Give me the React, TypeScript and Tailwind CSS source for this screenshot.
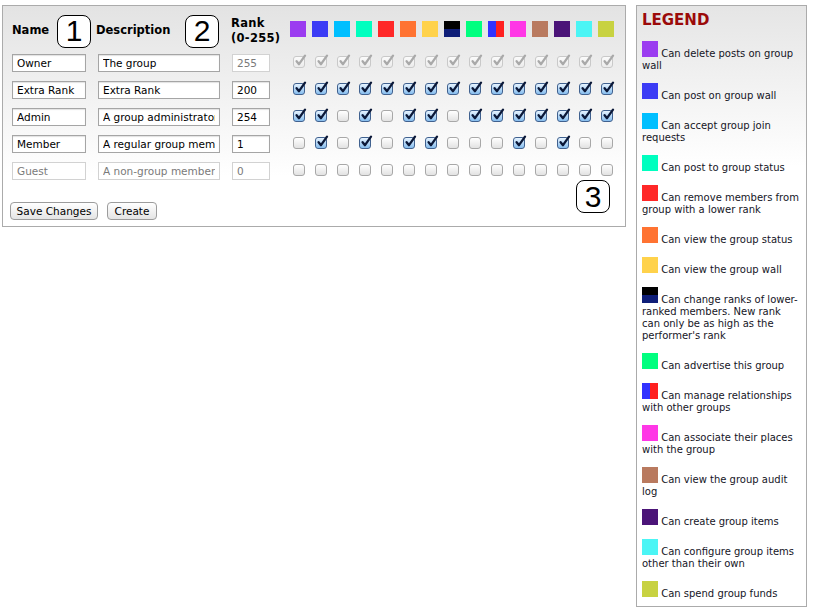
type Swatch = { bg: string; label: string };

const perms: Swatch[] = [
	{ bg: "bg-[#9b3cf0]", label: "Can delete posts on group wall" },
	{ bg: "bg-[#3c3cf5]", label: "Can post on group wall" },
	{ bg: "bg-[#00bfff]", label: "Can accept group join requests" },
	{ bg: "bg-[#00ffbf]", label: "Can post to group status" },
	{ bg: "bg-[#ff2828]", label: "Can remove members from group with a lower rank" },
	{ bg: "bg-[#ff7332]", label: "Can view the group status" },
	{ bg: "bg-[#ffd24b]", label: "Can view the group wall" },
	{
		bg: "bg-[linear-gradient(#000000_50%,#0f1e78_50%)]",
		label:
			"Can change ranks of lower-ranked members. New rank can only be as high as the performer's rank",
	},
	{ bg: "bg-[#00ff7f]", label: "Can advertise this group" },
	{
		bg: "bg-[linear-gradient(to_right,#3232ff_50%,#ff2020_50%)]",
		label: "Can manage relationships with other groups",
	},
	{ bg: "bg-[#ff37e6]", label: "Can associate their places with the group" },
	{ bg: "bg-[#b97a5f]", label: "Can view the group audit log" },
	{ bg: "bg-[#4b1478]", label: "Can create group items" },
	{ bg: "bg-[#4bf5f5]", label: "Can configure group items other than their own" },
	{ bg: "bg-[#c8d241]", label: "Can spend group funds" },
];

const all = Array(15).fill(true);
const pick = (on: number[]) => Array.from({ length: 15 }, (_, i) => on.includes(i));

const ranks = [
	{ name: "Owner", desc: "The group", rank: "255", checks: all, lockChecks: true, lockRank: true },
	{ name: "Extra Rank", desc: "Extra Rank", rank: "200", checks: all },
	{
		name: "Admin",
		desc: "A group administrator",
		rank: "254",
		checks: all.map((_, i) => ![2, 4, 7].includes(i)),
	},
	{ name: "Member", desc: "A regular group member", rank: "1", checks: pick([1, 3, 5, 6, 10, 12]) },
	{ name: "Guest", desc: "A non-group member", rank: "0", checks: pick([]), guest: true },
];

const ColorBox = ({ p }: { p: Swatch }) => (
	<span className={`inline-block w-[16px] h-[16px] align-baseline ${p.bg}`} />
);

const Callout = ({ n }: { n: number }) => (
	<span className="flex items-center justify-center w-[34px] h-[33px] border-[1.5px] border-black rounded-[8px] bg-white font-['Liberation_Sans',sans-serif] text-[30px] font-light leading-none">
		{n}
	</span>
);

const Check = ({ checked, disabled }: { checked: boolean; disabled?: boolean }) => {
	const look = checked
		? disabled
			? "border-[#c9c9c9] bg-[linear-gradient(#fbfbfb,#ececec)]"
			: "border-[#40618f] bg-[linear-gradient(#e6f3ff,#86bdee)]"
		: "border-[#a8a8a8] bg-[linear-gradient(#ffffff,#e2e2e2)]";
	return (
		<span className={`relative block w-[12px] h-[12px] rounded-[3px] border ${look}`}>
			{checked && (
				<svg className="absolute left-[0px] top-[-3px] w-[13px] h-[13px]" viewBox="0 0 13 13">
					<path
						d="M2.6 7.2 L5 10.2 L11 1.6"
						fill="none"
						stroke={disabled ? "#a9a9a9" : "#0b1838"}
						strokeWidth="2.3"
						strokeLinecap="round"
						strokeLinejoin="round"
					/>
				</svg>
			)}
		</span>
	);
};

const Field = ({ value, width, muted }: { value: string; width: string; muted?: boolean }) => (
	<input
		readOnly
		defaultValue={value}
		className={`h-[18px] px-[4px] border text-[10.5px] outline-none ${width} ${
			muted
				? "border-[#d2d2d2] text-[#7a7a7a] bg-white"
				: "border-[#a5a5a5] text-black bg-white shadow-[inset_0_1px_1px_rgba(0,0,0,0.12)]"
		}`}
	/>
);

export default function App() {
	return (
		<div className="flex items-start gap-[10px] pl-[2px] pt-[5px] font-['DejaVu_Sans',Verdana,sans-serif] text-black">
			<div className="relative w-[624px] border border-[#ababab] bg-[linear-gradient(to_bottom,#e3e3e3,#ffffff_170px)] pl-[9px] pt-[8px] pb-[6px]">
				<div className="flex items-center h-[34px] text-[11.5px] font-bold">
					<div className="flex items-center w-[86px]">
						<span className="w-[45px]">Name</span>
						<Callout n={1} />
					</div>
					<div className="flex items-center w-[134px]">
						<span className="w-[89px] ml-[-2px]">Description</span>
						<Callout n={2} />
					</div>
					<div className="w-[59px] ml-[-1px] leading-[15px] tracking-[0.3px]">
						Rank
						<br />
						(0-255)
					</div>
					{perms.map((p, i) => (
						<div key={i} className="w-[22px] self-start mt-[7px] flex">
							<ColorBox p={p} />
						</div>
					))}
				</div>

				{ranks.map((r) => (
					<div key={r.name} className="flex items-center h-[27px]">
						<div className="w-[86px]">
							<Field value={r.name} width="w-[74px]" muted={r.guest} />
						</div>
						<div className="w-[134px]">
							<Field value={r.desc} width="w-[122px]" muted={r.guest} />
						</div>
						<div className="w-[59px]">
							<Field value={r.rank} width="w-[38px]" muted={r.guest || r.lockRank} />
						</div>
						{r.checks.map((c, i) => (
							<div key={i} className="w-[22px] flex">
								<div className="w-[16px] flex justify-center">
									<Check checked={c} disabled={r.lockChecks} />
								</div>
							</div>
						))}
					</div>
				))}

				<div className="flex gap-[9px] mt-[19px] ml-[-2px]">
					<button
						type="button"
						className="h-[18px] w-[88px] border border-[#9c9c9c] rounded-[4px] bg-[linear-gradient(#ffffff,#e4e4e4)] text-[10.5px] leading-none"
					>
						Save Changes
					</button>
					<button
						type="button"
						className="h-[18px] w-[50px] border border-[#9c9c9c] rounded-[4px] bg-[linear-gradient(#ffffff,#e4e4e4)] text-[10.5px] leading-none"
					>
						Create
					</button>
				</div>

				<div className="absolute left-[573px] top-[174px]">
					<Callout n={3} />
				</div>
			</div>

			<div className="w-[171px] border border-[#ababab] bg-[linear-gradient(to_bottom,#e5e5e5,#ffffff_160px)] pl-[5px] pr-[6px] pt-[7px] pb-[6px]">
				<h2 className="text-[15px] leading-[15px] font-bold text-[#9b0a0a]">LEGEND</h2>
				<div className="mt-[13px] text-[10px] leading-[12px] text-[#15151f]">
					{perms.map((p, i) => (
						<div key={i} className="mb-[11px] last:mb-0">
							<ColorBox p={p} /> {p.label}
						</div>
					))}
				</div>
			</div>
		</div>
	);
}
